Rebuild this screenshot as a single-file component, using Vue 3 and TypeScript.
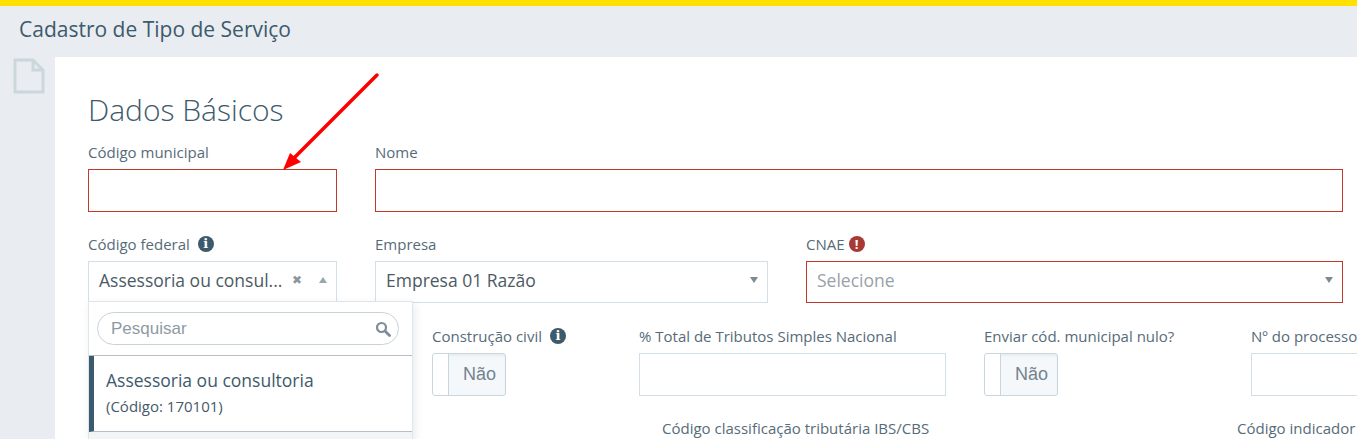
<script setup lang="ts">
const rowThree = [
  { label: '% Total de Tributos Simples Nacional', type: 'input', width: 307 },
  { label: 'Enviar cód. municipal nulo?', type: 'toggle', width: 229 },
  { label: 'Nº do processo', type: 'input', width: 307 },
]
</script>

<template>
  <div class="page">
    <header class="pageHeader">Cadastro de Tipo de Serviço</header>
    <div class="body">
      <aside class="side">
        <svg class="docIcon" width="32" height="36" viewBox="0 0 32 36">
          <path d="M2 2H20L30 12V34H2Z M20 2V12H30" fill="none" stroke="#ccd6dd" stroke-width="3" />
        </svg>
      </aside>
      <main class="content">
        <h1 class="title">Dados Básicos</h1>

        <div class="row">
          <div class="field w249">
            <label>Código municipal</label>
            <div class="box error"></div>
          </div>
          <div class="field grow">
            <label>Nome</label>
            <div class="box error"></div>
          </div>
        </div>

        <div class="row">
          <div class="field w249 selectField">
            <label>Código federal <span class="badge">i</span></label>
            <div class="box select">
              <span class="value">Assessoria ou consul...</span>
              <span class="clear">✖</span>
              <span class="caret up"></span>
            </div>
            <div class="dropdown">
              <div class="searchWrap">
                <div class="search">
                  <span>Pesquisar</span>
                  <svg width="16" height="16" viewBox="0 0 16 16">
                    <circle cx="6.5" cy="6.5" r="4.5" fill="none" stroke="#7f8c96" stroke-width="2.2" />
                    <path d="M10 10L14.5 14.5" stroke="#7f8c96" stroke-width="2.8" stroke-linecap="round" />
                  </svg>
                </div>
              </div>
              <div class="option">
                <div class="optionName">Assessoria ou consultoria</div>
                <div class="optionCode">(Código: 170101)</div>
              </div>
              <div class="optionNext"></div>
            </div>
          </div>
          <div class="field w393">
            <label>Empresa</label>
            <div class="box select">
              <span class="value">Empresa 01 Razão</span>
              <span class="caret"></span>
            </div>
          </div>
          <div class="field grow">
            <label>CNAE <span class="badge danger">!</span></label>
            <div class="box select error">
              <span class="value placeholder">Selecione</span>
              <span class="caret"></span>
            </div>
          </div>
        </div>

        <div class="row rowThree">
          <div class="field w169">
            <label>Construção civil <span class="badge">i</span></label>
            <div class="toggle"><span class="knob"></span><span class="toggleText">Não</span></div>
          </div>
          <div
            v-for="item in rowThree"
            :key="item.label"
            class="field"
            :style="{ width: item.width + 'px' }"
          >
            <label>{{ item.label }}</label>
            <div v-if="item.type === 'input'" class="box"></div>
            <div v-else class="toggle"><span class="knob"></span><span class="toggleText">Não</span></div>
          </div>
        </div>

        <div class="row rowFour">
          <label class="classLabel">Código classificação tributária IBS/CBS</label>
          <label>Código indicador</label>
        </div>
      </main>
    </div>

    <svg class="arrow" width="110" height="110" viewBox="0 0 110 110">
      <path d="M97 5L14 88" stroke="#ff0000" stroke-width="3.5" stroke-linecap="round" />
      <path d="M3 100L10 83L21 92Z" fill="#ff0000" />
    </svg>
  </div>
</template>

<style>
html,
body {
  margin: 0;
  overflow: hidden;
}
</style>

<style scoped>
.page {
  position: relative;
  width: 1357px;
  height: 439px;
  overflow: hidden;
  box-sizing: border-box;
  border-top: 6px solid #ffe000;
  background: #e9edf1;
  font-family: 'Open Sans', sans-serif;
  color: #3f5666;
}

.pageHeader {
  height: 51px;
  padding-left: 19px;
  font-size: 21px;
  line-height: 47px;
  color: #3d5a6c;
}

.body {
  display: flex;
  height: 382px;
}

.side {
  width: 55px;
  flex-shrink: 0;
}

.docIcon {
  display: block;
  margin: 1px 0 0 13px;
}

.content {
  flex: 1;
  min-width: 0;
  background: #fff;
  padding: 0 14px 0 33px;
}

.title {
  margin: 0;
  padding-top: 33px;
  height: 55px;
  font-size: 30px;
  font-weight: 300;
  line-height: 40px;
  color: #3d5a6c;
}

.row {
  display: flex;
  gap: 38px;
  margin-bottom: 25px;
}

.field {
  flex-shrink: 0;
}

.grow {
  flex: 1;
}

.w249 {
  width: 249px;
}

.w393 {
  width: 393px;
}

.w169 {
  width: 169px;
}

label {
  display: flex;
  align-items: flex-start;
  height: 24px;
  font-size: 15px;
  line-height: 14px;
  color: #566b79;
  white-space: nowrap;
}

.box {
  box-sizing: border-box;
  height: 43px;
  border: 1px solid #d3dfe6;
  background: #fff;
}

.error {
  border-color: #c0392b;
}

.select {
  display: flex;
  align-items: center;
  height: 42px;
  margin-bottom: 1px;
  padding: 0 9px 5px 10px;
  font-size: 17.5px;
  color: #4c5a64;
}

.value {
  flex: 1;
  white-space: nowrap;
}

.placeholder {
  color: #98a2a9;
}

.clear {
  font-size: 12px;
  color: #8a969e;
  margin-right: 17px;
}

.caret {
  width: 0;
  height: 0;
  border-left: 4px solid transparent;
  border-right: 4px solid transparent;
  border-top: 6px solid #7d8a92;
}

.caret.up {
  border-top: 0;
  border-bottom: 6px solid #9aa5ac;
}

.badge {
  flex-shrink: 0;
  width: 16px;
  height: 16px;
  margin: -1px 0 0 8px;
  border-radius: 50%;
  background: #3d5a6c;
  color: #fff;
  font-family: 'DejaVu Serif', serif;
  font-size: 13px;
  font-weight: 700;
  line-height: 16px;
  text-align: center;
}

.danger {
  margin-left: 4px;
  background: #a83a35;
  font-family: 'Open Sans', sans-serif;
}

.selectField {
  position: relative;
  z-index: 2;
}

.dropdown {
  position: absolute;
  top: 64px;
  left: 0;
  width: 325px;
  box-sizing: border-box;
  border: 1px solid #dfe6ea;
  background: #fff;
  box-shadow: 2px 3px 8px rgba(60, 80, 95, 0.12);
}

.searchWrap {
  padding: 10px 13px 10px 8px;
  border-bottom: 1px solid #b6bfc5;
}

.search {
  display: flex;
  align-items: center;
  justify-content: space-between;
  box-sizing: border-box;
  height: 33px;
  padding: 0 7px 0 13px;
  border: 1px solid #c7d2d9;
  border-radius: 17px;
  font-family: 'Liberation Sans', sans-serif;
  font-size: 17px;
  color: #8f9aa2;
}

.option {
  box-sizing: border-box;
  height: 76px;
  padding: 12px 0 0 12px;
  border-left: 5px solid #3a5b6e;
  border-bottom: 1px solid #b6bfc5;
}

.optionName {
  font-size: 17.5px;
  line-height: 24px;
  color: #3d5a6c;
}

.optionCode {
  margin-top: 3px;
  font-size: 15px;
  line-height: 22px;
  color: #46596a;
}

.optionNext {
  height: 30px;
  background: #f2f5f6;
}

.rowThree {
  margin-left: 344px;
  width: 1200px;
  height: 67px;
}

.toggle {
  box-sizing: border-box;
  display: flex;
  width: 74px;
  height: 43px;
  border: 1px solid #c9d6de;
  border-radius: 3px;
  background: #f4f8fb;
  box-shadow: inset 0 2px 2px rgba(90, 110, 125, 0.08);
}

.knob {
  width: 15px;
  background: #fff;
  border-right: 1px solid #c9d6de;
  border-radius: 3px 0 0 3px;
}

.toggleText {
  flex: 1;
  padding-left: 14px;
  font-family: 'Liberation Sans', sans-serif;
  font-size: 18px;
  line-height: 41px;
  color: #75838d;
}

.rowFour {
  margin-left: 574px;
  gap: 0;
  width: 1200px;
}

.classLabel {
  width: 575px;
}

.arrow {
  position: absolute;
  top: 64px;
  left: 280px;
}
</style>
